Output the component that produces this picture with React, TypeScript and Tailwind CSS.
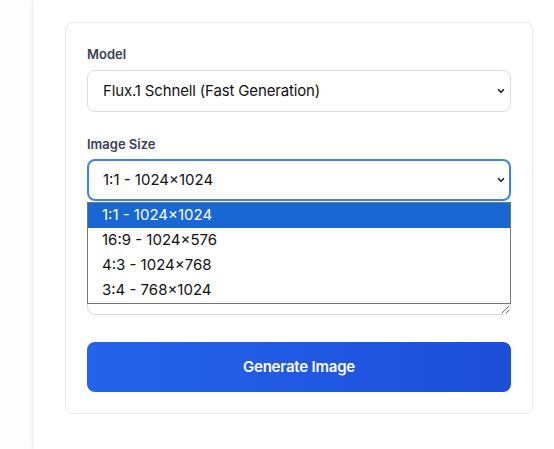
import { ChevronDown } from "lucide-react";

const sizes = ["1:1 - 1024×1024", "16:9 - 1024×576", "4:3 - 1024×768", "3:4 - 768×1024"];

export default function App() {
  return (
    <div
      className="w-[554px] h-[449px] overflow-hidden bg-white flex"
      style={{ fontFamily: "Inter, 'Noto Sans', sans-serif" }}
    >
      {/* left gutter */}
      <div className="w-[34px] shrink-0 bg-[#fdfdfd]" />

      {/* main panel */}
      <div className="flex-1 bg-white shadow-[-3px_0_5px_rgba(0,0,0,0.05)] pl-[31px] pt-[22px]">
        <div className="w-[468px] rounded-lg border border-[#e9eaee] bg-white p-[21px]">
          {/* Model */}
          <label className="block text-[13px] leading-5 font-semibold text-[#374151] mb-1.5">Model</label>
          <div className="relative">
            <div className="h-[42px] rounded-lg border border-[#d9dbe0] bg-white flex items-center pl-[15px] pr-[4px] text-[15px] tracking-[-0.15px] text-[#111]">
              <span className="flex-1">Flux.1 Schnell (Fast Generation)</span>
              <ChevronDown size={10} strokeWidth={4} className="text-[#222]" />
            </div>
          </div>

          {/* Image Size */}
          <label className="block text-[13px] leading-5 font-semibold text-[#374151] mt-[22px] mb-[5px]">
            Image Size
          </label>
          <div className="relative">
            <div className="h-[42px] rounded-lg border-2 border-[#3b82f6] bg-white flex items-center pl-[14px] pr-[3px] text-[15px] text-[#111]">
              <span className="flex-1">1:1 - 1024×1024</span>
              <ChevronDown size={10} strokeWidth={4} className="text-[#222]" />
            </div>

            {/* open option list */}
            <div className="absolute left-0 right-0 top-[43px] z-10 border border-[#767676] bg-white text-[15px]">
              {sizes.map((s, i) => (
                <div
                  key={s}
                  className={
                    i === 0
                      ? "h-[25px] pl-[14px] flex items-center bg-[#1967d2] text-white"
                      : "h-[25px] pl-[14px] flex items-center text-[#111]"
                  }
                >
                  {s}
                </div>
              ))}
            </div>
          </div>

          {/* prompt field, mostly covered by the open list */}
          <div className="h-5 mt-[22px] mb-[5px]" />
          <textarea
            rows={3}
            className="block w-full h-[67px] rounded-lg border border-[#d9dbe0] bg-white px-[14px] py-2 text-[15px]"
          />

          <button className="mt-[27px] w-full h-[50px] rounded-lg bg-gradient-to-r from-[#2563eb] to-[#1d4ed8] text-white text-[15px] tracking-[-0.2px] font-semibold">
            Generate Image
          </button>
        </div>
      </div>
    </div>
  );
}
